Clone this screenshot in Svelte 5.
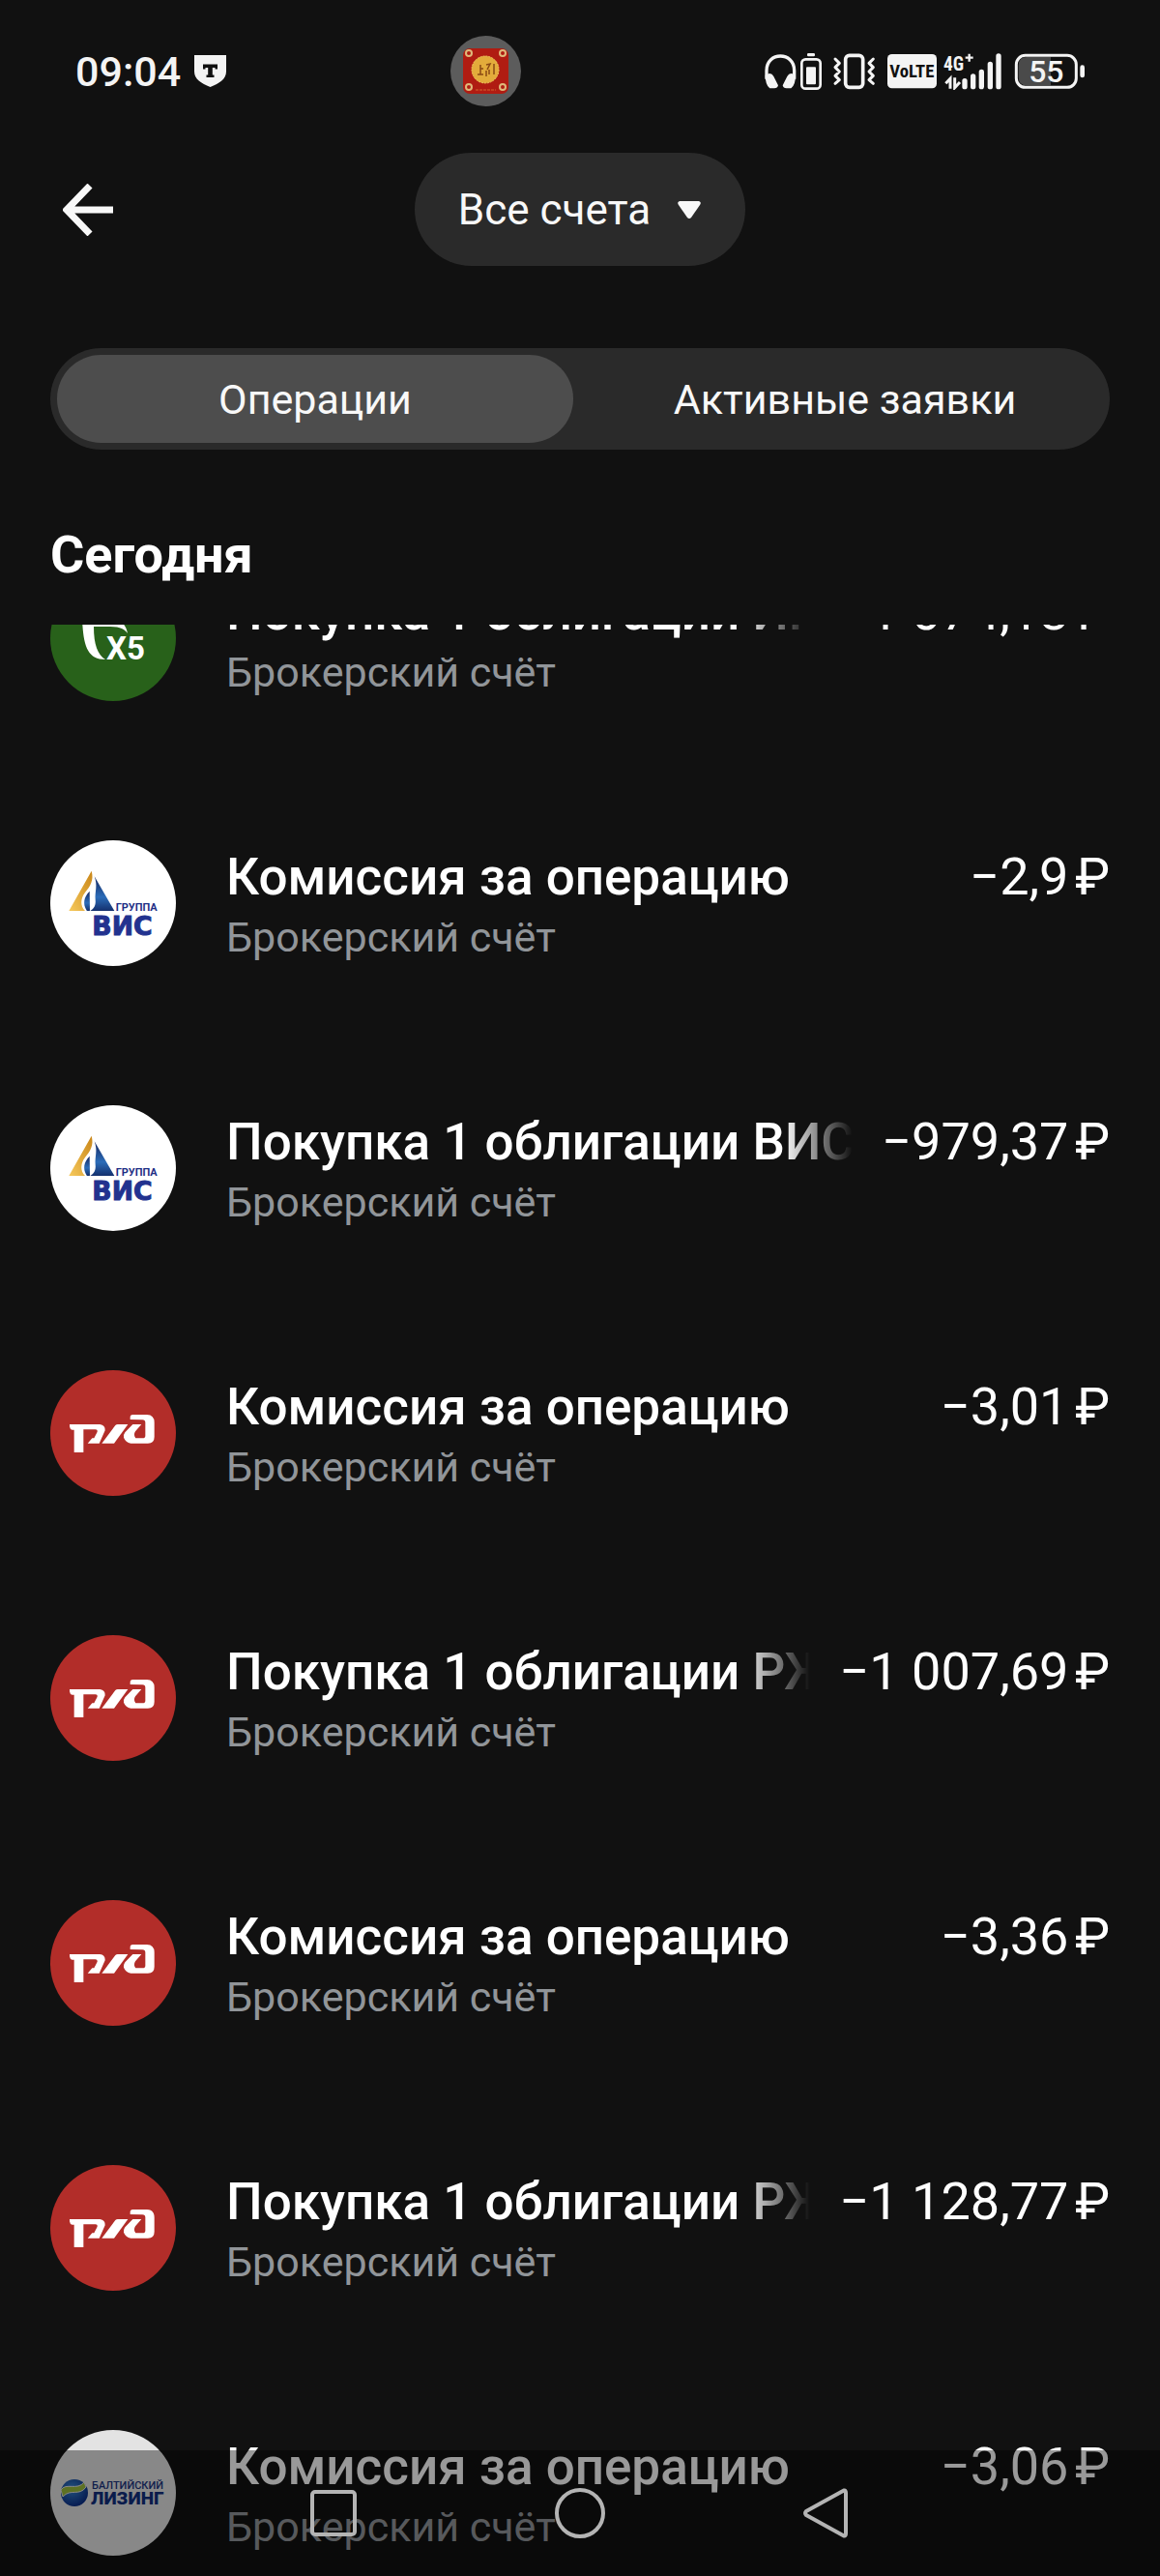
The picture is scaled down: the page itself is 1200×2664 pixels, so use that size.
<script>
  let tab = $state('ops');

  const operations = [
    { logo: 'x5', title: 'Покупка 1 облигации ИК', amount: '−1 074,18' },
    { logo: 'vis', title: 'Комиссия за операцию', amount: '−2,9' },
    { logo: 'vis', title: 'Покупка 1 облигации ВИС', amount: '−979,37' },
    { logo: 'rzd', title: 'Комиссия за операцию', amount: '−3,01' },
    { logo: 'rzd', title: 'Покупка 1 облигации РЖ', amount: '−1 007,69' },
    { logo: 'rzd', title: 'Комиссия за операцию', amount: '−3,36' },
    { logo: 'rzd', title: 'Покупка 1 облигации РЖ', amount: '−1 128,77' },
    { logo: 'baltic', title: 'Комиссия за операцию', amount: '−3,06' }
  ];
</script>

{#snippet logo(kind)}
  {#if kind === 'x5'}
    <svg class="logo" viewBox="0 0 130 130" aria-hidden="true">
      <circle cx="65" cy="65" r="65" fill="#28611a" />
      <path d="M33 44C34 72 38 87 57 87C49 82 45 72 45 53H62C73 53 77 56 80 60C78 50 72 44 59 44Z" fill="#fff" />
      <text x="58" y="87" font-size="33" font-weight="700" fill="#fff">X5</text>
    </svg>
  {:else if kind === 'vis'}
    <svg class="logo" viewBox="0 0 390 390" aria-hidden="true">
      <defs>
        <linearGradient id="gold" x1="0" y1="1" x2="1" y2="0">
          <stop offset="0" stop-color="#f6c95c" />
          <stop offset="1" stop-color="#c98618" />
        </linearGradient>
        <linearGradient id="sea" x1="0" y1="0" x2="0" y2="1">
          <stop offset="0" stop-color="#14245e" />
          <stop offset="0.6" stop-color="#2b6cb8" />
          <stop offset="1" stop-color="#14306e" />
        </linearGradient>
      </defs>
      <circle cx="195" cy="195" r="195" fill="#fff" />
      <path d="M128 95L58 219H108C92 204 94 180 108 162C124 142 136 124 128 95Z" fill="url(#gold)" />
      <path d="M137 112L199 219H124C136 212 142 202 140 184C138 160 148 140 137 112Z" fill="url(#sea)" />
      <path d="M122 158C104 176 100 196 113 218C116 219 120 219 123 218Z" fill="url(#sea)" />
      <text x="203" y="219" font-size="33" font-weight="700" fill="#1f2f86">ГРУППА</text>
      <text class="wide" x="130" y="295" font-size="80" font-weight="700" stroke="#22328f" stroke-width="3" fill="#22328f">ВИС</text>
    </svg>
  {:else if kind === 'rzd'}
    <svg class="logo" viewBox="36 51 390 390" aria-hidden="true">
      <circle cx="231" cy="246" r="195" fill="#b22d29" />
      <g fill="#fff">
        <path d="M96 219H190Q207 221 206 238L188 278H152L166 262H172L182 242Q183 235 176 235H139V306H110V236H104Q97 235 96 226Z" />
        <path d="M196 278L238 222Q241 219 245 219H277L234 278Z" />
        <path d="M284 204V197Q284 189 292 189H336Q359 190 359 213V258Q359 278 339 278H286Q270 275 264 260Q263 250 268 244L292 219H319L300 241Q293 252 301 262H322Q331 262 331 254V214Q331 205 322 205Z" />
      </g>
    </svg>
  {:else}
    <svg class="logo" viewBox="0 0 130 130" aria-hidden="true">
      <defs>
        <radialGradient id="globe" cx="0.4" cy="0.35" r="0.7">
          <stop offset="0" stop-color="#3a86cf" />
          <stop offset="1" stop-color="#082a84" />
        </radialGradient>
      </defs>
      <circle cx="65" cy="65" r="65" fill="#e3e3e3" />
      <circle cx="25" cy="65" r="14" fill="url(#globe)" />
      <path d="M11 62C16 54 28 63 35 54L37 59C30 69 21 60 13 69Z" fill="#9bbd3c" stroke="#e3e3e3" stroke-width="1" />
      <text x="43" y="61" font-size="11" font-weight="500" fill="#1c357f">БАЛТИЙСКИЙ</text>
      <text x="42" y="77" font-size="19" font-weight="900" fill="#11307f">ЛИЗИНГ</text>
    </svg>
  {/if}
{/snippet}

<div class="app">
  <div class="status">
    <div class="clock">
      <span>09:04</span>
      <svg width="33" height="33" viewBox="0 0 33 33" aria-hidden="true">
        <path d="M0 0H33V17C33 25 26 29 16.500 33C7 29 0 25 0 17Z" fill="#f4f4f4" />
        <path d="M9 9.500H24V14.500H21.500V13H18.800V20.500H20.500V23H12.500V20.500H14.200V13H11.500V14.500H9Z" fill="#111" />
      </svg>
    </div>
    <svg class="camera" width="73" height="73" viewBox="0 0 73 73" aria-hidden="true">
      <circle cx="36.500" cy="36.500" r="36.500" fill="#5c5c5c" />
      <rect x="13" y="13" width="47" height="47" rx="7" fill="#b01c12" />
      <circle cx="36" cy="35" r="14" fill="#e3ac3b" stroke="#f0c860" stroke-dasharray="2 1" />
      <path d="M31 30V40M28 40H34M31 34H34M37 30L41 29L38 35M37 36V42M40 35V40M45 29V40" fill="none" stroke="#8a4a14" stroke-width="1.500" />
      <g fill="#b01c12" stroke="#dfb97a" stroke-width="2">
        <circle cx="19" cy="18" r="3" /><circle cx="54" cy="18" r="3" />
        <circle cx="19" cy="53" r="3" /><circle cx="54" cy="53" r="3" />
      </g>
      <path d="M26 56H47" stroke="#d2622e" stroke-width="1" stroke-dasharray="3 1" />
    </svg>
    <svg width="332" height="38" viewBox="96 104 996 114" role="img" aria-label="Наушники, вибрация, VoLTE, 4G+, заряд 55">
      <path d="M102 184V158C102 98 188 98 188 158V184" fill="none" stroke="#f4f4f4" stroke-width="10" />
      <path d="M98 172Q116 160 124 176L138 204Q136 214 124 213H112Q98 202 98 172ZM192 172Q174 160 166 176L152 204Q154 214 166 213H178Q192 202 192 172Z" fill="#f4f4f4" />
      <rect x="228" y="104" width="24" height="10" rx="4" fill="#f4f4f4" />
      <rect x="211" y="123" width="58" height="91" rx="12" fill="none" stroke="#f4f4f4" stroke-width="8" />
      <rect x="225" y="147" width="30" height="54" rx="3" fill="#f4f4f4" />
      <rect x="347" y="111" width="54" height="99" rx="12" fill="none" stroke="#f4f4f4" stroke-width="11" />
      <path d="M315 122L328 135L315 148L328 161L315 174L328 187L315 198M433 122L420 135L433 148L420 161L433 174L420 187L433 198" fill="none" stroke="#f4f4f4" stroke-width="9" stroke-linecap="round" stroke-linejoin="round" />
      <rect x="477" y="107" width="153" height="106" rx="14" fill="#f4f4f4" />
      <text class="narrow" x="553" y="180" font-size="56" font-weight="700" text-anchor="middle" fill="#111">VoLTE</text>
      <text class="narrow" x="651" y="158" font-size="58" font-weight="700" fill="#f4f4f4">4G</text>
      <path d="M731 106V130M719 118H743" stroke="#f4f4f4" stroke-width="7" />
      <path d="M658 198L672 183V214M686 180V211L702 194" fill="none" stroke="#f4f4f4" stroke-width="9" />
      <path d="M717 190V208M743 176V208M769 162V208M796 138V208M822 113V208" stroke="#f4f4f4" stroke-width="16" stroke-linecap="round" />
      <path d="M910 116H984V204H910Q884 204 884 178V142Q884 116 910 116Z" fill="#4a4a4a" />
      <rect x="877" y="111" width="186" height="99" rx="28" fill="none" stroke="#f4f4f4" stroke-width="9" />
      <rect x="1075" y="141" width="14" height="39" rx="7" fill="#f4f4f4" />
      <text x="970" y="194" font-size="96" font-weight="500" text-anchor="middle" fill="#f4f4f4">55</text>
    </svg>
  </div>

  <header>
    <button class="back" aria-label="Назад">
      <svg width="52" height="54" viewBox="0 0 52 54" aria-hidden="true">
        <path d="M52 27H5M28 2L4 27L28 52" fill="none" stroke="#f8f8f8" stroke-width="7" />
      </svg>
    </button>
    <button class="account">
      Все счета
      <svg width="26" height="20" viewBox="0 0 26 20" aria-hidden="true">
        <path d="M3 1H23Q26 2 24 5L15 18Q13 20 11 18L2 5Q0 2 3 1Z" fill="#f8f8f8" />
      </svg>
    </button>
  </header>

  <div class="tabs" role="tablist">
    <button role="tab" aria-selected={tab === 'ops'} class:active={tab === 'ops'} onclick={() => (tab = 'ops')}>Операции</button>
    <button role="tab" aria-selected={tab === 'orders'} class:active={tab === 'orders'} onclick={() => (tab = 'orders')}>Активные заявки</button>
  </div>

  <h2>Сегодня</h2>

  <div class="viewport">
    <ul>
      {#each operations as op}
        <li>
          {@render logo(op.logo)}
          <div class="body">
            <div class="line">
              <span class="title">{op.title}</span>
              <span class="amount">{op.amount}&#8239;₽</span>
            </div>
            <div class="sub">Брокерский счёт</div>
          </div>
        </li>
      {/each}
    </ul>
  </div>

  <nav>
    <button aria-label="Недавние">
      <svg width="52" height="52" viewBox="0 0 52 52" aria-hidden="true"><rect x="4" y="4" width="44" height="44" rx="3" /></svg>
    </button>
    <button aria-label="Домой">
      <svg width="52" height="52" viewBox="0 0 52 52" aria-hidden="true"><circle cx="26" cy="26" r="24" /></svg>
    </button>
    <button aria-label="Назад">
      <svg width="52" height="52" viewBox="0 0 52 52" aria-hidden="true"><path d="M44 2.500Q46 2 46 5V47Q46 50 44 49.500L5 28Q3 26 5 24Z" /></svg>
    </button>
  </nav>
</div>

<style>
  :global(body) {
    margin: 0;
    background: #111;
  }

  .app {
    position: relative;
    display: flex;
    flex-direction: column;
    height: 100vh;
    overflow: hidden;
    background: #111;
    color: #fff;
    font-family: Roboto, 'Noto Sans', sans-serif;
  }

  button {
    border: 0;
    padding: 0;
    background: none;
    color: #f8f8f8;
    font: inherit;
    cursor: pointer;
  }

  svg {
    display: block;
    flex: none;
  }

  .status {
    display: grid;
    grid-template-columns: minmax(0, 388px) 1fr auto;
    align-items: center;
    height: 147px;
    padding: 0 77px 0 78px;
    flex: none;
  }

  .clock {
    display: flex;
    align-items: center;
    gap: 14px;
    color: #f4f4f4;
    font-size: 43px;
    font-weight: 500;
  }

  .narrow {
    font-family: 'Roboto Condensed', 'Liberation Sans Narrow', Roboto, sans-serif;
  }

  .wide {
    font-family: 'DejaVu Sans', sans-serif;
  }

  header {
    display: grid;
    grid-template-columns: 1fr auto 1fr;
    align-items: center;
    padding: 11px 65px 0;
    flex: none;
  }

  .back {
    justify-self: start;
  }

  .account {
    display: flex;
    align-items: center;
    gap: 27px;
    height: 117px;
    padding: 0 45px;
    border-radius: 59px;
    background: #2a2a2a;
    font-size: 44px;
  }

  .tabs {
    display: grid;
    grid-template-columns: 1fr 1fr;
    gap: 14px;
    margin: 85px 52px 0;
    padding: 7px;
    border-radius: 53px;
    background: #2a2a2a;
    flex: none;
  }

  .tabs button {
    height: 91px;
    border-radius: 46px;
    font-size: 43px;
  }

  .tabs .active {
    background: #4d4d4d;
  }

  h2 {
    margin: 77px 52px 40px;
    font-size: 54px;
    line-height: 64px;
    font-weight: 700;
    flex: none;
  }

  .viewport {
    flex: 1;
    min-height: 0;
    overflow: hidden;
  }

  ul {
    list-style: none;
    margin: -123px 0 0;
    padding: 0 52px;
  }

  li {
    display: flex;
    align-items: center;
    gap: 52px;
    height: 274px;
  }

  .logo {
    width: 130px;
    height: 130px;
  }

  .body {
    flex: 1;
    min-width: 0;
    padding-top: 6px;
  }

  .line {
    display: flex;
    gap: 30px;
    line-height: 64px;
    white-space: nowrap;
  }

  .title {
    flex: 1;
    min-width: 0;
    overflow: hidden;
    font-size: 53px;
    font-weight: 500;
    mask-image: linear-gradient(to left, transparent, #000 72px);
  }

  .amount {
    font-size: 54px;
  }

  .sub {
    color: #919599;
    font-size: 43px;
    line-height: 60px;
  }

  nav {
    position: absolute;
    inset: auto 0 0;
    display: flex;
    justify-content: center;
    gap: 203px;
    padding: 39px 0;
    background: rgba(0, 0, 0, 0.4);
  }

  nav svg {
    fill: none;
    stroke: #b4b4b4;
    stroke-width: 4;
    stroke-linejoin: round;
  }
</style>
